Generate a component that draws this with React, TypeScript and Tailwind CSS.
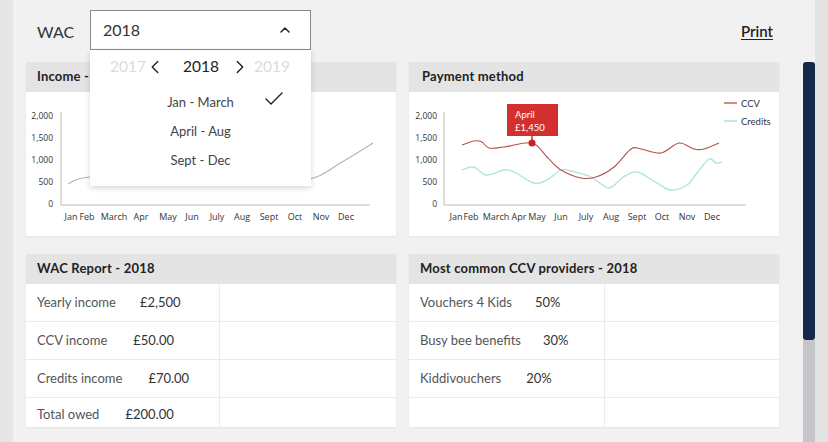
import React from 'react';
import { Check, ChevronLeft, ChevronRight, ChevronUp } from 'lucide-react';

type Pt = [number, number];

// catmull-rom through the points, as cubic bezier segments
const smooth = (pts: Pt[]) => {
  let d = `M${pts[0][0]},${pts[0][1]}`;
  for (let i = 0; i < pts.length - 1; i++) {
    const p0 = pts[i - 1] || pts[i];
    const p1 = pts[i];
    const p2 = pts[i + 1];
    const p3 = pts[i + 2] || p2;
    const c1x = p1[0] + (p2[0] - p0[0]) / 6;
    const c1y = p1[1] + (p2[1] - p0[1]) / 6;
    const c2x = p2[0] - (p3[0] - p1[0]) / 6;
    const c2y = p2[1] - (p3[1] - p1[1]) / 6;
    d += ` C${c1x.toFixed(1)},${c1y.toFixed(1)} ${c2x.toFixed(1)},${c2y.toFixed(1)} ${p2[0]},${p2[1]}`;
  }
  return d;
};

const months = ['Jan', 'Feb', 'March', 'Apr', 'May', 'Jun', 'July', 'Aug', 'Sept', 'Oct', 'Nov', 'Dec'];
const yTicks = [
  { label: '2,000', y: 24 },
  { label: '1,500', y: 46 },
  { label: '1,000', y: 68 },
  { label: '500', y: 90 },
  { label: '0', y: 112 },
];

const incomeX = [45, 61, 88, 115, 142, 166, 191, 216, 243, 269, 295, 320];
const paymentX = [47, 62, 87, 110, 128, 152, 177, 202, 228, 253, 278, 303];

const incomeLine: Pt[] = [[42, 92], [64, 85], [150, 83], [230, 88], [284, 87], [316, 70], [347, 51]];

const ccvLine: Pt[] = [
  [53, 53], [65, 49], [73, 50], [80, 56], [95, 55], [123, 51], [138, 65], [152, 78], [172, 86],
  [187, 85], [205, 75], [222, 57], [232, 57], [252, 61], [270, 51], [285, 57], [295, 57], [310, 51],
];

const creditsLine: Pt[] = [
  [53, 78], [65, 75], [77, 83], [95, 78], [105, 80], [125, 91], [138, 88], [152, 78], [162, 79],
  [182, 85], [200, 96], [213, 86], [228, 80], [248, 91], [262, 98], [278, 93], [288, 81], [300, 67],
  [307, 71], [313, 70],
];

const Axes = ({ xs, end, labelX }: { xs: number[]; end: number; labelX: number }) => (
  <>
    <line x1={35} y1={20} x2={35} y2={113} stroke="#bdbdbd" strokeWidth={1} />
    <line x1={35} y1={113} x2={end} y2={113} stroke="#bdbdbd" strokeWidth={1} />
    {yTicks.map((t) => (
      <text key={t.label} x={labelX} y={t.y + 3} textAnchor="end" fontSize={8.5} fill="#333">
        {t.label}
      </text>
    ))}
    {months.map((m, i) => (
      <text key={m} x={xs[i]} y={128} textAnchor="middle" fontSize={9} fill="#333">
        {m}
      </text>
    ))}
  </>
);

const IncomeChart = () => (
  <svg width={370} height={144} className="block" style={{ fontFamily: '"Open Sans", sans-serif' }}>
    <Axes xs={incomeX} end={344} labelX={27} />
    <path d={smooth(incomeLine)} fill="none" stroke="#b3b3b3" strokeWidth={1.1} />
  </svg>
);

const PaymentChart = () => (
  <svg width={370} height={144} className="block" style={{ fontFamily: '"Open Sans", sans-serif' }}>
    <Axes xs={paymentX} end={337} labelX={28} />
    <path d={smooth(creditsLine)} fill="none" stroke="#a6e6dc" strokeWidth={1.3} />
    <path d={smooth(ccvLine)} fill="none" stroke="#b8504b" strokeWidth={1.1} />
    <line x1={123} y1={44} x2={123} y2={51} stroke="#d12c2c" strokeWidth={1.5} />
    <circle cx={123} cy={51} r={3.5} fill="#c42424" />
    <rect x={98} y={12} width={51} height={32} fill="#d32f2f" />
    <text x={106} y={26} fontSize={9.5} fill="#fff" fontFamily="Lato, sans-serif">April</text>
    <text x={106} y={39} fontSize={9.5} fill="#fff" fontFamily="Lato, sans-serif">£1,450</text>
    <line x1={315} y1={11} x2={328} y2={11} stroke="#b8504b" strokeWidth={1.3} />
    <text x={332} y={14.5} fontSize={9.5} fill="#333" fontFamily="Lato, sans-serif">CCV</text>
    <line x1={315} y1={29} x2={328} y2={29} stroke="#a6e6dc" strokeWidth={1.5} />
    <text x={332} y={32.5} fontSize={9.5} fill="#333" fontFamily="Lato, sans-serif">Credits</text>
  </svg>
);

const Card = ({ title, children, pl }: { title: string; children: React.ReactNode; pl: string }) => (
  <div className="bg-white shadow-[0_1px_2px_rgba(0,0,0,0.06)]">
    <div className={`h-[30px] bg-[#e4e4e4] flex items-center ${pl} text-[13px] font-bold tracking-[0.2px] text-[#222]`}>
      {title}
    </div>
    {children}
  </div>
);

const TableRows = ({ rows, split }: { rows: { label: string; value: string; gap: number }[]; split: number }) => (
  <div>
    {rows.map((r, i) => {
      const last = i === rows.length - 1;
      return (
        <div key={i} className={`flex ${last ? 'h-[29px]' : 'h-[38px] border-b border-[#ebebeb]'}`}>
          <div
            className={`flex pl-[11px] border-r border-[#ebebeb] text-[13px] text-[#555] ${last ? 'items-start pt-[7px]' : 'items-center'}`}
            style={{ width: split }}
          >
            <span>{r.label}</span>
            <span className="text-[#333]" style={{ marginLeft: r.gap }}>{r.value}</span>
          </div>
          <div className="flex-1" />
        </div>
      );
    })}
  </div>
);

const reportRows = [
  { label: 'Yearly income', value: '£2,500', gap: 24 },
  { label: 'CCV income', value: '£50.00', gap: 26 },
  { label: 'Credits income', value: '£70.00', gap: 26 },
  { label: 'Total owed', value: '£200.00', gap: 26 },
];

const providerRows = [
  { label: 'Vouchers 4 Kids', value: '50%', gap: 23 },
  { label: 'Busy bee benefits', value: '30%', gap: 22 },
  { label: 'Kiddivouchers', value: '20%', gap: 25 },
  { label: '', value: '', gap: 0 },
];

const YearDropdown = () => (
  <div className="absolute left-0 top-[40px] w-[221px] h-[136px] bg-white shadow-[0_2px_6px_rgba(0,0,0,0.16)] z-10">
    <div className="h-[34px] flex items-center pl-[20px] text-[15.5px]">
      <span className="text-[#dcdcdc]">2017</span>
      <ChevronLeft size={22} strokeWidth={1.5} className="ml-[-2px] text-[#222]" />
      <span className="ml-[17px] text-[#222]">2018</span>
      <ChevronRight size={22} strokeWidth={1.5} className="ml-[10px] text-[#222]" />
      <span className="ml-[3px] text-[#dcdcdc]">2019</span>
    </div>
    <div className="pt-[4px] text-[13px] text-[#444]">
      {['Jan - March', 'April - Aug', 'Sept - Dec'].map((o, i) => (
        <div key={o} className="relative h-[29px] flex items-center justify-center">
          {o}
          {i === 0 && <Check size={24} strokeWidth={1.4} className="absolute left-[172px] top-[-1px] text-[#222]" />}
        </div>
      ))}
    </div>
  </div>
);

export default function App() {
  return (
    <div className="w-[828px] h-[442px] flex overflow-hidden bg-[#f1f1f1]" style={{ fontFamily: 'Lato, "Open Sans", sans-serif' }}>
      <div className="w-[13px] bg-[#e6e6e6]" />
      <div className="w-[790px] pl-[13px] pr-[24px]">
        <div className="h-[62px] flex items-start pt-[10px]">
          <span className="ml-[11px] mt-[10px] text-[16px] text-[#333] w-[53px]">WAC</span>
          <div className="relative">
            <div className="w-[221px] h-[40px] bg-white border border-[#8a8a8a] flex items-center justify-between pl-[12px] pr-[17px]">
              <span className="text-[16px] text-[#333]">2018</span>
              <ChevronUp size={16} strokeWidth={2.2} className="text-[#222]" />
            </div>
            <YearDropdown />
          </div>
          <span className="ml-auto mr-[6px] mt-[10px] text-[15px] font-semibold text-[#222] underline underline-offset-2">Print</span>
        </div>
        <div className="grid grid-cols-2 gap-x-[13px] gap-y-[18px]">
          <Card title="Income - 2018" pl="pl-[11px]">
            <IncomeChart />
          </Card>
          <Card title="Payment method" pl="pl-[13px]">
            <PaymentChart />
          </Card>
          <Card title="WAC Report - 2018" pl="pl-[11px]">
            <TableRows rows={reportRows} split={194} />
          </Card>
          <Card title="Most common CCV providers - 2018" pl="pl-[11px]">
            <TableRows rows={providerRows} split={196} />
          </Card>
        </div>
      </div>
      <div className="w-[12px] flex flex-col">
        <div className="h-[62px]" />
        <div className="h-[278px] bg-[#14284a] rounded-[3px]" />
        <div className="flex-1 bg-[#c4c6ca]" />
      </div>
      <div className="flex-1 bg-[#e3e3e3]" />
    </div>
  );
}
